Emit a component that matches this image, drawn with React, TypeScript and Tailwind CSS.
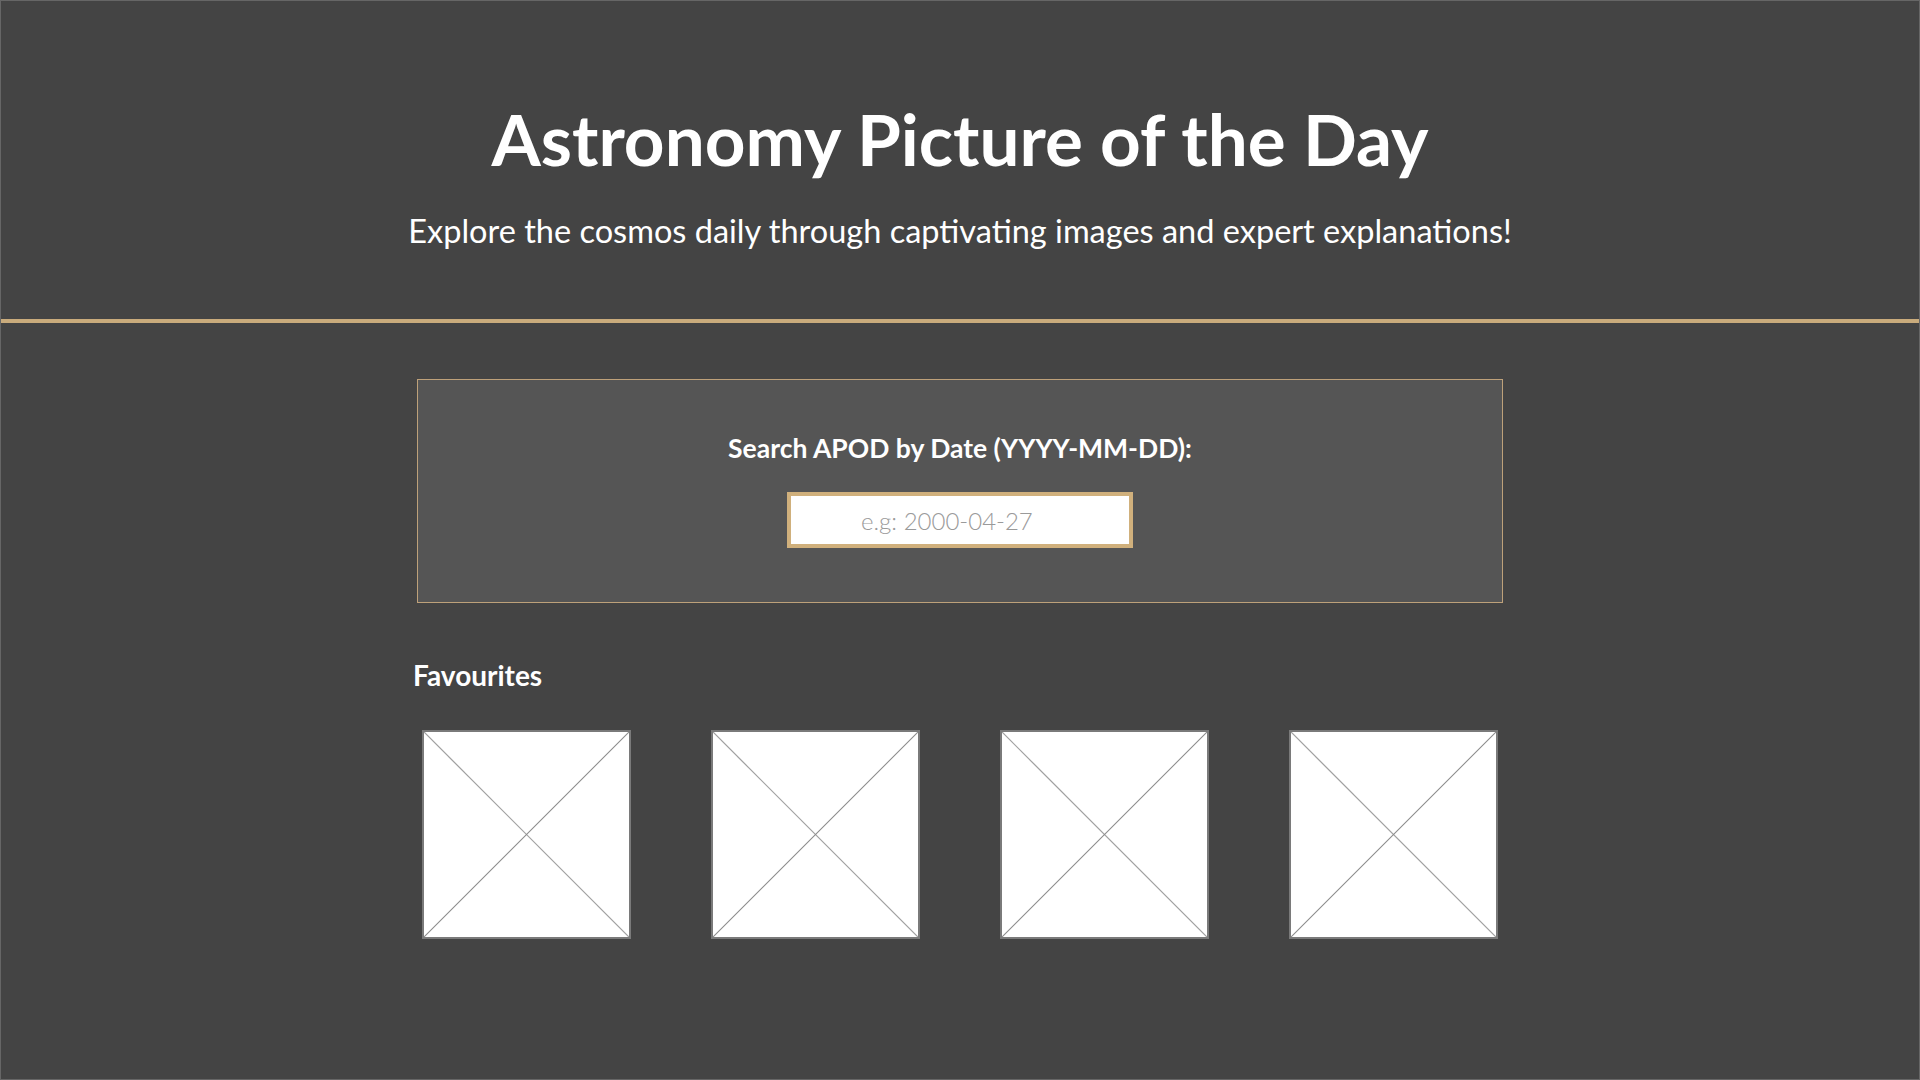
import React from 'react';

const favourites = [1, 2, 3, 4];

// empty picture placeholder: white square crossed corner to corner
function Placeholder() {
  return (
    <div className="w-[209px] h-[209px] bg-white border-2 border-[#7a7a7a]">
      <svg viewBox="0 0 100 100" preserveAspectRatio="none" className="w-full h-full block">
        <line x1="0" y1="0" x2="100" y2="100" stroke="#a0a0a0" strokeWidth="0.6" />
        <line x1="100" y1="0" x2="0" y2="100" stroke="#8c8c8c" strokeWidth="0.5" />
      </svg>
    </div>
  );
}

export default function App() {
  return (
    <div className="h-screen bg-[#444444] border border-[#666666] text-white font-['Lato',sans-serif] overflow-hidden">
      {/* Header */}
      <header className="h-[318px] flex flex-col items-center pt-[96px]">
        <h1 className="text-[71px] leading-[84px] font-bold">Astronomy Picture of the Day</h1>
        <p className="text-[32.5px] leading-[38px] mt-[31px]">Explore the cosmos daily through captivating images and expert explanations!</p>
      </header>
      <div className="h-[4px] bg-[#c9ab7c]" />

      <main className="w-[1086px] mx-auto pt-[56px]">
        {/* Search panel */}
        <section className="h-[224px] bg-[#555555] border border-[#bea17a] flex flex-col items-center pt-[52px]">
          <label htmlFor="date" className="text-[26.5px] leading-[32px] font-bold">Search APOD by Date (YYYY-MM-DD):</label>
          <input
            id="date"
            type="text"
            placeholder="e.g: 2000-04-27"
            className="mt-[28px] w-[346px] h-[56px] bg-white border-4 border-[#d0b07c] pl-[70px] text-[24px] font-light text-gray-700 placeholder:text-[#9a9a9a] outline-none"
          />
        </section>

        {/* Favourites */}
        <h2 className="mt-[55px] -ml-[4px] text-[28px] leading-[34px] font-bold">Favourites</h2>
        <div className="mt-[38px] pl-[5px] flex gap-[80px]">
          {favourites.map((f) => (
            <Placeholder key={f} />
          ))}
        </div>
      </main>
    </div>
  );
}
